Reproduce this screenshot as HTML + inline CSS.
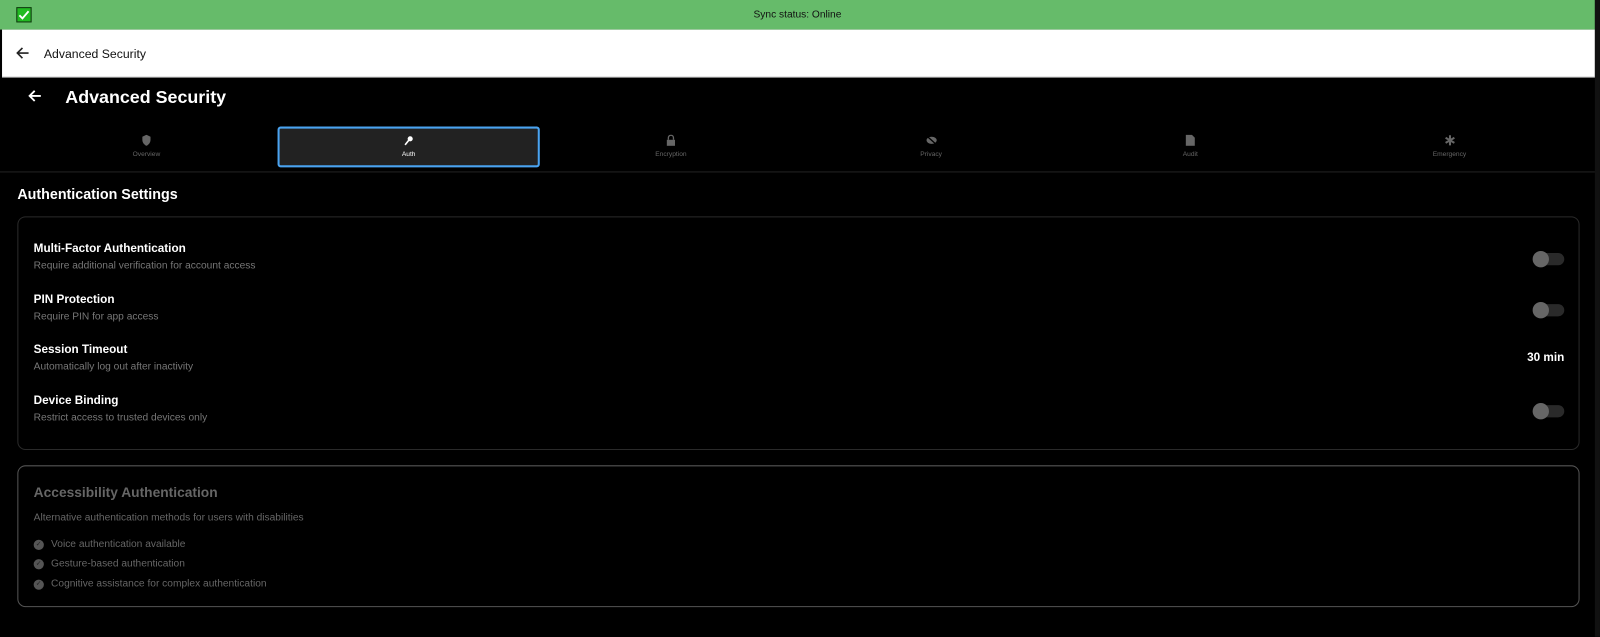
<!DOCTYPE html>
<html><head><meta charset="utf-8"><style>
*{margin:0;padding:0;box-sizing:border-box}
body{width:1600px;height:636px;background:#000;font-family:"Liberation Sans",sans-serif;overflow:hidden;color:#fff}
#w{position:absolute;left:0;top:0;width:1568px;height:624px;transform:scale(1.0204);transform-origin:0 0}
.sync{position:absolute;left:0;top:0;width:1563px;height:29px;background:#66bb6a;color:#111;font-size:10px;text-align:center;line-height:29px}
.chk{position:absolute;left:16px;top:7px;width:15px;height:15px;background:#22bb22;border:1px solid #113311}
.chk svg{position:absolute;left:0;top:0}
.hdr{position:absolute;left:2px;top:29px;width:1561px;height:47px;background:#fff;border-bottom:1px solid #ccc;color:#111;font-size:12px}
.hdr span{position:absolute;left:41px;top:17px}
.right{position:absolute;left:1563px;top:0;width:5px;height:624px;background:#111}
.t1{position:absolute;left:64px;top:85px;font-size:17.5px;font-weight:bold}
.tabs{position:absolute;left:0;top:124px;width:1563px;height:45px;border-bottom:1px solid #222}
.tab{position:absolute;top:0;width:257px;height:40px;text-align:center;color:#666;font-size:6.5px}
.tab .ic{display:block;margin:8px auto 5px;height:11px}
.tab.on{background:#222;border:2px solid #4aa3f0;border-radius:3px;color:#fff}
h2{position:absolute;left:17px;top:182px;font-size:14px;font-weight:bold}
.card{position:absolute;left:17px;width:1531px;border:1px solid #2a2a2a;border-radius:8px}
.row{position:absolute;left:15px;width:1500px}
.row b{display:block;font-size:11.5px}
.row i{display:block;font-style:normal;color:#777;font-size:10px;margin-top:5px}
.tg{position:absolute;right:0;top:10px;width:30px;height:12px;border-radius:6px;background:#2a2a2a}
.tg:before{content:"";position:absolute;left:-1px;top:-2px;width:16px;height:16px;border-radius:50%;background:#666}
.acc{border-color:#555;top:456px;height:139px}
.acc .h{position:absolute;left:15px;top:18px;font-size:13.5px;font-weight:bold;color:#666}
.acc .d{position:absolute;left:15px;top:45px;font-size:10px;color:#666}
.li{position:absolute;left:15px;font-size:10px;color:#666;line-height:12px}
.li:before{content:"✓";display:inline-block;width:10px;height:10px;border-radius:50%;background:#555;color:#222;font-size:7px;line-height:10px;text-align:center;margin-right:7px;vertical-align:top;margin-top:1px}
</style></head><body><div id="w">
<div class="sync"><div class="chk"><svg width="13" height="13" viewBox="0 0 13 13"><path d="M2 7l3 3 6-7" stroke="#fff" stroke-width="1.8" fill="none"/></svg></div>Sync status: Online</div>
<div class="hdr"><svg style="position:absolute;left:13px;top:17px" width="14" height="12" viewBox="0 0 14 12"><path d="M13 6H2M7 1L2 6l5 5" stroke="#222" stroke-width="1.6" fill="none"/></svg><span>Advanced Security</span></div>
<div class="right"></div>
<svg style="position:absolute;left:27px;top:88px" width="14" height="12" viewBox="0 0 14 12"><path d="M13 6H2M7 1L2 6l5 5" stroke="#fff" stroke-width="1.8" fill="none"/></svg>
<div class="t1">Advanced Security</div>
<div class="tabs">
<div class="tab" style="left:15px"><svg class="ic" width="11" height="11" viewBox="0 0 10 11"><path d="M5 0L1 2v3c0 3 2 5 4 6 2-1 4-3 4-6V2z" fill="#666"/></svg>Overview</div>
<div class="tab on" style="left:272px"><svg class="ic" width="11" height="11" viewBox="0 0 11 11" style="margin-top:6px"><circle cx="7" cy="4" r="2.5" fill="#fff"/><path d="M6 5L2 10" stroke="#fff" stroke-width="1.6"/></svg>Auth</div>
<div class="tab" style="left:529px"><svg class="ic" width="9" height="11" viewBox="0 0 9 11"><path d="M2 5V3a2.5 2.5 0 015 0v2" stroke="#666" fill="none" stroke-width="1.3"/><rect x="0.5" y="5" width="8" height="6" fill="#666"/></svg>Encryption</div>
<div class="tab" style="left:784px"><svg class="ic" width="12" height="11" viewBox="0 0 12 11"><ellipse cx="6" cy="5.5" rx="5" ry="3.5" fill="#666"/><path d="M1 1l10 9" stroke="#000" stroke-width="1.3"/></svg>Privacy</div>
<div class="tab" style="left:1038px"><svg class="ic" width="9" height="11" viewBox="0 0 9 11"><path d="M0 0h6l3 3v8H0z" fill="#666"/></svg>Audit</div>
<div class="tab" style="left:1292px"><svg class="ic" width="10" height="11" viewBox="0 0 10 10"><path d="M5 0v10M0.7 2.5l8.6 5M0.7 7.5l8.6-5" stroke="#666" stroke-width="2"/></svg>Emergency</div>
</div>
<h2>Authentication Settings</h2>
<div class="card" style="top:212px;height:229px">
<div class="row" style="top:25px"><b>Multi-Factor Authentication</b><i>Require additional verification for account access</i><div class="tg"></div></div>
<div class="row" style="top:75px"><b>PIN Protection</b><i>Require PIN for app access</i><div class="tg"></div></div>
<div class="row" style="top:124px"><b>Session Timeout</b><i>Automatically log out after inactivity</i><b style="position:absolute;right:0;top:8px">30 min</b></div>
<div class="row" style="top:174px"><b>Device Binding</b><i>Restrict access to trusted devices only</i><div class="tg"></div></div>
</div>
<div class="card acc">
<div class="h">Accessibility Authentication</div>
<div class="d">Alternative authentication methods for users with disabilities</div>
<div class="li" style="top:71px">Voice authentication available</div>
<div class="li" style="top:90px">Gesture-based authentication</div>
<div class="li" style="top:110px">Cognitive assistance for complex authentication</div>
</div>
</div></body></html>
